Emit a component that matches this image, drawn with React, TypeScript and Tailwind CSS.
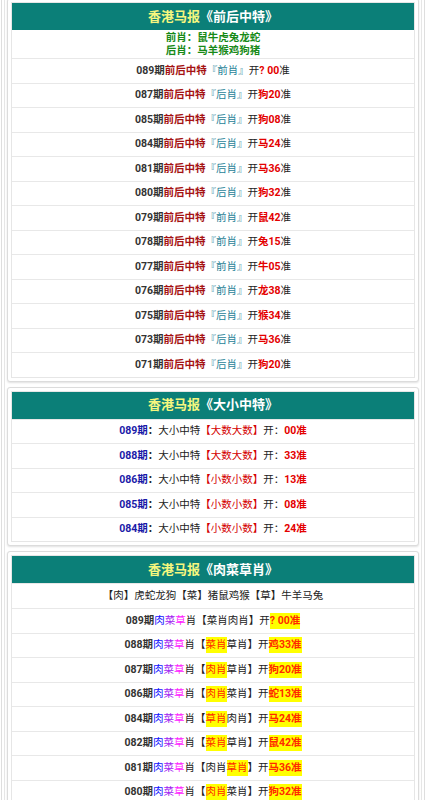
import React from "react";

const FONT = { fontFamily: '"Roboto", "Noto Sans CJK SC", sans-serif' };

const QH: Array<[string, string, string]> = [
  ["089", "前肖", "? 00"],
  ["087", "后肖", "狗20"],
  ["085", "后肖", "狗08"],
  ["084", "后肖", "马24"],
  ["081", "后肖", "马36"],
  ["080", "后肖", "狗32"],
  ["079", "前肖", "鼠42"],
  ["078", "前肖", "兔15"],
  ["077", "前肖", "牛05"],
  ["076", "前肖", "龙38"],
  ["075", "后肖", "猴34"],
  ["073", "后肖", "马36"],
  ["071", "后肖", "狗20"],
];

const DX: Array<[string, string, string]> = [
  ["089", "大数大数", "00"],
  ["088", "大数大数", "33"],
  ["086", "小数小数", "13"],
  ["085", "小数小数", "08"],
  ["084", "小数小数", "24"],
];

// [期数, 第一肖, 第二肖, 中的是第几个 (0 = 无), 结果]
const RC: Array<[string, string, string, number, string]> = [
  ["089", "菜肖", "肉肖", 0, "? 00"],
  ["088", "菜肖", "草肖", 1, "鸡33"],
  ["087", "肉肖", "草肖", 1, "狗20"],
  ["086", "肉肖", "菜肖", 1, "蛇13"],
  ["084", "草肖", "肉肖", 1, "马24"],
  ["082", "菜肖", "草肖", 1, "鼠42"],
  ["081", "肉肖", "草肖", 2, "马36"],
  ["080", "肉肖", "菜肖", 1, "狗32"],
];

function Card({ title, children, first }: { title: string; children: React.ReactNode; first?: boolean }) {
  return (
    <div
      className={`mx-[2px] rounded-[3px] border border-[#dcdcdc] bg-white p-[3px] shadow-[0_1px_2px_rgba(0,0,0,0.12)] ${
        first ? "-mt-[2px]" : "mt-[5px]"
      }`}
    >
      <div className="border border-[#e6e6e6]">
        <div className="flex h-[27px] items-center justify-center bg-[#0b7f78] text-[13px] font-bold">
          <span className="text-[#f6f77e]">香港马报</span>
          <span className="text-white">《{title}》</span>
        </div>
        {children}
      </div>
    </div>
  );
}

function Row({ children, tall }: { children: React.ReactNode; tall?: boolean }) {
  return (
    <div
      className={`flex items-center justify-center border-t border-[#e8e8e8] text-[10.5px] ${
        tall ? "h-[25px]" : "h-[24.5px]"
      }`}
    >
      {children}
    </div>
  );
}

export default function App() {
  return (
    <div className="bg-white" style={FONT}>
      <div className="mx-[1px] border-x border-[#dedede] px-[2px]">
        <div className="border-x border-[#e6e6e6] pb-1">
          <Card title="前后中特" first>
            <div className="flex h-[28px] flex-col items-center justify-center text-[10.5px] font-bold leading-[13px] text-[#178a17]">
              <div>前肖：鼠牛虎兔龙蛇</div>
              <div>后肖：马羊猴鸡狗猪</div>
            </div>
            {QH.map(([n, x, r]) => (
              <Row key={n}>
                <span className="font-bold text-[#333]">{n}期</span>
                <span className="font-bold text-[#a51212]">前后中特</span>
                <span className="text-[#1f8398]">『{x}』</span>
                <span className="text-[#222]">开</span>
                <span className="font-bold text-[#e40000]">{r}</span>
                <span className="text-[#222]">准</span>
              </Row>
            ))}
          </Card>

          <Card title="大小中特">
            {DX.map(([n, x, r]) => (
              <Row key={n}>
                <span className="font-bold text-[#1a1aa8]">{n}期</span>
                <span className="font-bold text-[#222]">：</span>
                <span className="text-[#222]">大小中特</span>
                <span className="text-[#d40000]">【{x}】</span>
                <span className="text-[#222]">开：</span>
                <span className="font-bold text-[#e40000]">{r}准</span>
              </Row>
            ))}
          </Card>

          <Card title="肉菜草肖">
            <Row tall>
              <span className="text-[#222]">【肉】虎蛇龙狗【菜】猪鼠鸡猴【草】牛羊马兔</span>
            </Row>
            {RC.map(([n, a, b, hit, r]) => (
              <Row key={n}>
                <span className="font-bold text-[#333]">{n}期</span>
                <span className="text-[#1010ff]">肉</span>
                <span className="text-[#a020f0]">菜</span>
                <span className="text-[#ff20ff]">草</span>
                <span className="text-[#222]">肖【</span>
                <span className={hit === 1 ? "bg-[#ffff00] text-[#ff2a00]" : "text-[#222]"}>{a}</span>
                <span className={hit === 2 ? "bg-[#ffff00] text-[#ff2a00]" : "text-[#222]"}>{b}</span>
                <span className="text-[#222]">】开</span>
                <span className="bg-[#ffff00] font-bold text-[#ff2a00]">{r}准</span>
              </Row>
            ))}
          </Card>
        </div>
      </div>
    </div>
  );
}
